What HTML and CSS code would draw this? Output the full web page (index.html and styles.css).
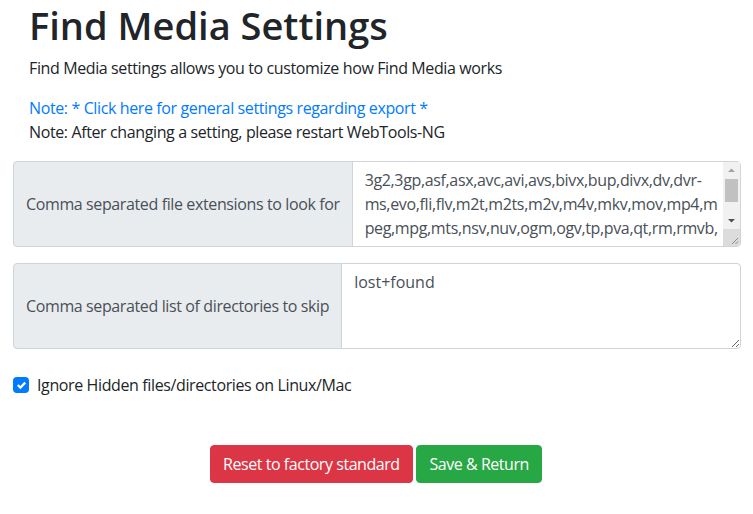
FILE: index.html
```html
<!DOCTYPE html>
<html lang="en">
<head>
<meta charset="utf-8">
<title>Find Media Settings</title>
<link rel="stylesheet" href="styles.css">
</head>
<body>
<div class="page">
  <div class="intro">
    <h1 class="title">Find Media Settings</h1>
    <p class="lead">Find Media settings allows you to customize how Find Media works</p>
    <div class="notes">
      <a class="note-link" href="#">Note: * Click here for general settings regarding export *</a>
      <div class="note">Note: After changing a setting, please restart WebTools-NG</div>
    </div>
  </div>

  <div class="input-group">
    <label class="group-label" for="ext">Comma separated file extensions to look for</label>
    <div class="field">
      <textarea id="ext" class="group-input group-input-scroll" rows="3">3g2,3gp,asf,asx,avc,avi,avs,bivx,bup,divx,dv,dvr-ms,evo,fli,flv,m2t,m2ts,m2v,m4v,mkv,mov,mp4,mpeg,mpg,mts,nsv,nuv,ogm,ogv,tp,pva,qt,rm,rmvb,sdp,svq3,strm,ts,ty,vdr,viv,vob,vp3,wmv,wpl,wtv,xsp,xvid,webm,aac,ac3,aif,aiff,ape,dts,flac,m4a,m4b,m4p,mka,mp2,mp3,mpa,ogg,opus,wav,wma,wv,bmp,gif,jpeg,jpg,png,tif,tiff,webp,heic,iso,img,ifo,m3u,m3u8,mpls,bdmv,f4v,h264,vc1,trp,rec,mk3d,xspf,nrg,udf</textarea>
      <div class="scrollbar" aria-hidden="true">
        <div class="sb-btn">
          <svg width="17" height="17" viewBox="0 0 17 17"><path d="M5 10h7L8.5 6.5z" fill="#a3a3a3"/></svg>
        </div>
        <div class="sb-track">
          <div class="sb-thumb"></div>
        </div>
        <div class="sb-btn">
          <svg width="17" height="17" viewBox="0 0 17 17"><path d="M5 7h7L8.5 10.5z" fill="#505050"/></svg>
        </div>
        <div class="sb-corner">
          <svg width="17" height="17" viewBox="0 0 17 17"><path d="M15 9L9 15M15 12.5L12.5 15" stroke="#8a8a8a" stroke-width="1" fill="none"/></svg>
        </div>
      </div>
    </div>
  </div>

  <div class="input-group">
    <label class="group-label" for="dirs">Comma separated list of directories to skip</label>
    <div class="field">
      <textarea id="dirs" class="group-input" rows="3">lost+found</textarea>
    </div>
  </div>

  <label class="check">
    <span class="check-box">
      <svg viewBox="0 0 8 8" width="9" height="9"><path fill="#fff" d="M6.564.75l-3.59 3.612-1.538-1.55L0 4.26l2.974 2.99L8 2.193z"/></svg>
    </span>
    <span class="check-text">Ignore Hidden files/directories on Linux/Mac</span>
  </label>

  <div class="actions">
    <button class="btn btn-danger" type="button">Reset to factory standard</button>
    <button class="btn btn-success" type="button">Save &amp; Return</button>
  </div>
</div>
</body>
</html>
```

FILE: styles.css
```css
* { box-sizing: border-box; }

html, body {
  margin: 0;
  background: #fff;
}

body {
  font-family: "Open Sans", "Noto Sans", sans-serif;
  font-size: 16px;
  line-height: 24px;
  letter-spacing: -0.38px;
  color: #212529;
}

.page {
  padding: 0 12px 0 13px;
}

.intro {
  padding-left: 16px;
}

.title {
  margin: 0 0 8px;
  padding-top: 1px;
  height: 48px;
  font-size: 38px;
  line-height: 48px;
  font-weight: 600;
  letter-spacing: 0;
}

.lead {
  margin: 0 0 16px;
}

.notes {
  margin-bottom: 17px;
}

.note-link {
  display: block;
  color: #007bff;
  text-decoration: none;
}

.input-group {
  display: flex;
  margin-bottom: 16px;
}

.group-label {
  flex: 0 0 auto;
  display: flex;
  align-items: center;
  padding: 6px 12px;
  color: #495057;
  background: #e9ecef;
  border: 1px solid #ced4da;
  border-radius: 4px 0 0 4px;
  white-space: nowrap;
}

.field {
  position: relative;
  flex: 1 1 auto;
  min-width: 0;
  display: flex;
  margin-left: -1px;
}

.group-input {
  flex: 1 1 auto;
  min-width: 0;
  height: 86px;
  margin: 0;
  padding: 6px 0 6px 12px;
  font: inherit;
  letter-spacing: 0;
  color: #495057;
  background: #fff;
  border: 1px solid #ced4da;
  border-radius: 0 4px 4px 0;
  overflow: hidden;
  resize: vertical;
  outline: none;
}

.group-input-scroll {
  padding-right: 17px;
  letter-spacing: -0.35px;
}

.scrollbar {
  position: absolute;
  top: 1px;
  right: 1px;
  bottom: 1px;
  width: 17px;
  display: flex;
  flex-direction: column;
  background: #f1f1f1;
  border-bottom-right-radius: 3px;
  overflow: hidden;
}

.sb-btn {
  height: 17px;
  flex: 0 0 17px;
}

.sb-btn svg,
.sb-corner svg {
  display: block;
}

.sb-track {
  flex: 1 1 auto;
}

.sb-thumb {
  height: 23px;
  margin: 0 2px;
  background: #c1c1c1;
}

.sb-corner {
  flex: 0 0 17px;
  background: #dcdcdc;
}

.check {
  display: flex;
  align-items: center;
  margin-top: 24px;
}

.check-box {
  width: 16px;
  height: 16px;
  border-radius: 4px;
  background: #007bff;
  display: flex;
  align-items: center;
  justify-content: center;
  margin-right: 8px;
}

.actions {
  margin-top: 48px;
  padding-right: 2px;
  text-align: center;
}

.btn {
  font: inherit;
  letter-spacing: -0.45px;
  line-height: 24px;
  padding: 6px 12px;
  border: 1px solid transparent;
  border-radius: 4px;
  color: #fff;
  cursor: pointer;
}

.btn-danger {
  background: #dc3545;
  border-color: #dc3545;
}

.btn-success {
  background: #28a745;
  border-color: #28a745;
}
```
